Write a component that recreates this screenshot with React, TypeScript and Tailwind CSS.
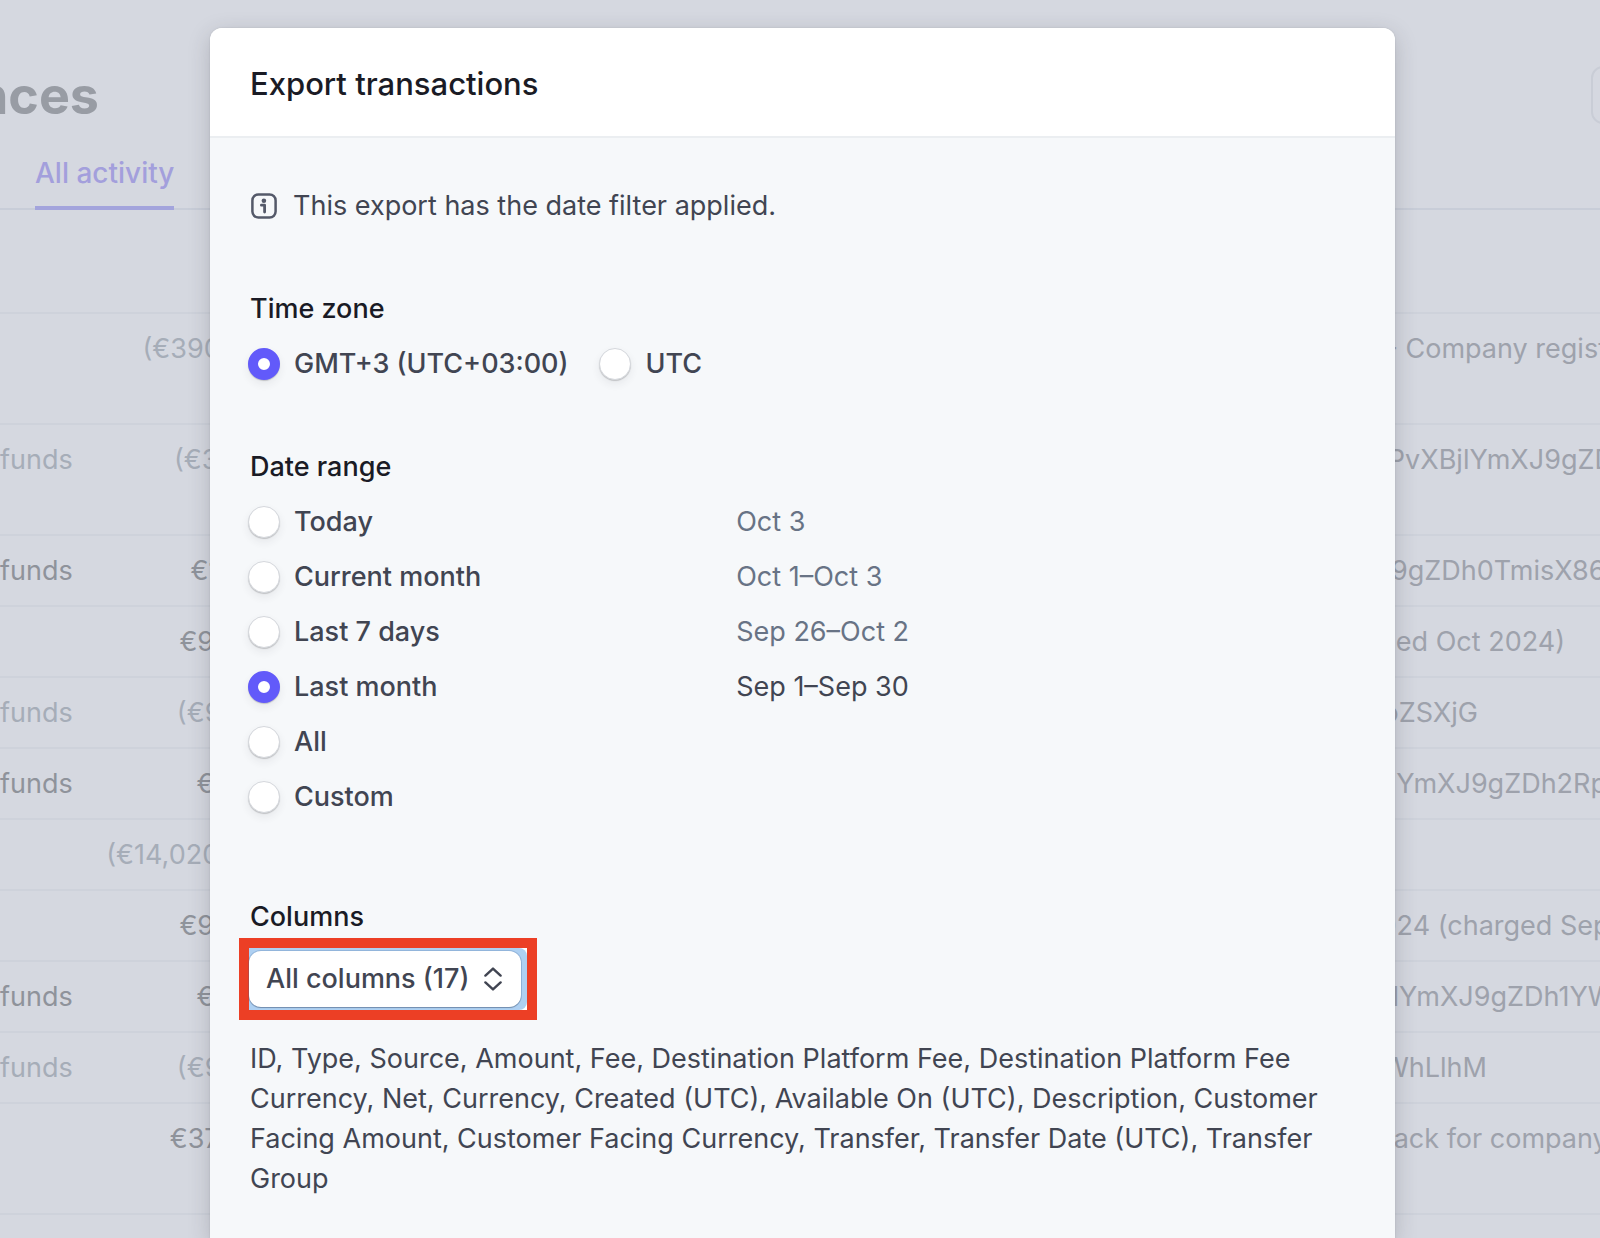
import React, { useState } from "react";

type Tone = "strong" | "muted";

interface Row {
  type: string;
  amount: string;
  description: string;
  tone: Tone;
  tall?: boolean;
}

const rows: Row[] = [
  { type: "", amount: "(€390.00)", description: "Plan - Company registration", tone: "muted", tall: true },
  { type: "funds", amount: "(€31.17)", description: "py_1JPvXBjlYmXJ9gZDh", tone: "muted", tall: true },
  { type: "funds", amount: "€10.01", description: "rmXJ9gZDh0TmisX86", tone: "strong" },
  { type: "", amount: "€93.03", description: "charged Oct 2024)", tone: "strong" },
  { type: "funds", amount: "(€9.33)", description: "ch_4oZSXjG", tone: "muted" },
  { type: "funds", amount: "€9.33", description: "pi_4vlYmXJ9gZDh2Rp", tone: "strong" },
  { type: "", amount: "(€14,020.44)", description: "", tone: "muted" },
  { type: "", amount: "€93.03", description: "ug 2024 (charged Sep 2024)", tone: "strong" },
  { type: "funds", amount: "€9.33", description: "py_7JlYmXJ9gZDh1YW", tone: "strong" },
  { type: "funds", amount: "(€9.33)", description: "co_7WhLlhM", tone: "muted" },
  { type: "", amount: "€371.33", description: "Playback for company", tone: "strong", tall: true },
];

const zones = ["GMT+3 (UTC+03:00)", "UTC"];

const ranges = [
  { label: "Today", dates: "Oct 3" },
  { label: "Current month", dates: "Oct 1–Oct 3" },
  { label: "Last 7 days", dates: "Sep 26–Oct 2" },
  { label: "Last month", dates: "Sep 1–Sep 30" },
  { label: "All", dates: "" },
  { label: "Custom", dates: "" },
];

const cell = "border-b-2 border-[#ced2db] py-[15px] align-top leading-[39px] whitespace-nowrap";

function Radio({ name, label, checked, onSelect }: { name: string; label: string; checked: boolean; onSelect: () => void }) {
  return (
    <label className="-ml-0.5 flex items-center gap-3.5 font-medium leading-10">
      <input
        type="radio"
        name={name}
        checked={checked}
        onChange={onSelect}
        className="size-8 shrink-0 appearance-none rounded-full border border-[#d5d8dd] bg-white shadow-[0_1px_1px_rgba(0,0,0,0.18),0_4px_8px_rgba(48,49,61,0.08)] checked:border-10 checked:border-[#625afa]"
      />
      {label}
    </label>
  );
}

function InfoIcon() {
  return (
    <svg width="26" height="26" viewBox="0 0 26 26" fill="none" stroke="#545969" strokeWidth="2.5" aria-hidden="true">
      <rect x="1.4" y="1.4" width="23.2" height="23.2" rx="6" />
      <circle cx="12.9" cy="7.7" r="2.3" fill="#545969" stroke="none" />
      <path d="M10.4 12.2h3.2v6.8" strokeWidth="2.8" strokeLinecap="round" strokeLinejoin="round" />
    </svg>
  );
}

function Background() {
  return (
    <div className="col-start-1 row-start-1 min-w-0 overflow-hidden">
      <header className="flex items-start justify-between pt-[66px]">
        <h1 className="flex w-[99px] justify-end text-[52px] leading-[60px] font-bold text-[#989ca4]">Balances</h1>
        <div className="w-[9px] shrink-0">
          <button className="h-[58px] rounded-xl border-2 border-[#c9cdd6] px-6">Export</button>
        </div>
      </header>
      <nav className="mt-[27px] flex border-b-2 border-[#c8cdd8] pl-[35px]">
        <a href="#activity" className="-mb-0.5 border-b-4 border-[#a3a4dc] pb-[13px] text-[28px] leading-10 font-medium text-[#a39fdc]">
          All activity
        </a>
      </nav>
      <table className="w-full table-fixed border-separate border-spacing-0">
        <colgroup>
          <col className="w-[75px]" />
          <col className="w-[196px]" />
          <col />
          <col className="w-[277px]" />
        </colgroup>
        <thead>
          <tr className="h-[104px]">
            <th className={cell} />
            <th className={cell} />
            <th className={cell} />
            <th className={cell} />
          </tr>
        </thead>
        <tbody>
          {rows.map((r, i) => (
            <tr key={i} className={(r.tall ? "h-[111px] " : "h-[71px] ") + (r.tone === "strong" ? "text-[#8f939b]" : "text-[#a6adb8]")}>
              <td className={cell}>{r.type}</td>
              <td className={cell + " text-right"}>{r.amount}</td>
              <td className={cell} />
              <td className={cell + " overflow-hidden text-[#9ea2ac]"}>{r.description}</td>
            </tr>
          ))}
        </tbody>
      </table>
    </div>
  );
}

export default function App() {
  const [zone, setZone] = useState(zones[0]);
  const [range, setRange] = useState("Last month");

  return (
    <div className="grid min-h-screen grid-cols-1 overflow-hidden bg-[#d5d8e0] font-['Inter','Liberation_Sans',sans-serif] text-[27px]">
      <Background />

      <div className="z-10 col-start-1 row-start-1 flex pt-7 pr-[205px] pl-[210px]">
        <section
          role="dialog"
          aria-labelledby="export-title"
          className="min-w-0 flex-1 rounded-t-xl bg-[#f6f8fa] text-[#414552] shadow-[0_0_2px_rgba(0,0,0,0.12),0_6px_22px_rgba(48,49,61,0.22)]"
        >
          <header className="rounded-t-xl border-b-2 border-[#ebeef1] bg-white px-10 pt-9 pb-8">
            <h2 id="export-title" className="text-[31px] leading-10 font-medium text-[#1a1b25]">
              Export transactions
            </h2>
          </header>

          <div className="px-10 pt-12 pb-10">
            <p className="flex items-center gap-4 pl-px leading-10">
              <InfoIcon />
              This export has the date filter applied.
            </p>

            <fieldset className="mt-[63px]">
              <legend className="leading-10 font-medium text-[#1a1b25]">Time zone</legend>
              <div className="mt-[15px] flex gap-[33px]">
                {zones.map((z) => (
                  <Radio key={z} name="zone" label={z} checked={zone === z} onSelect={() => setZone(z)} />
                ))}
              </div>
            </fieldset>

            <fieldset className="mt-[63px]">
              <legend className="leading-10 font-medium text-[#1a1b25]">Date range</legend>
              <div className="mt-[15px] grid gap-[15px]">
                {ranges.map((r) => (
                  <div key={r.label} className="grid grid-cols-[44%_1fr] leading-10">
                    <Radio name="range" label={r.label} checked={range === r.label} onSelect={() => setRange(r.label)} />
                    <span className={range === r.label ? "text-[#414552]" : "text-[#687385]"}>{r.dates}</span>
                  </div>
                ))}
              </div>
            </fieldset>

            <label htmlFor="columns" className="mt-20 block leading-10 font-medium text-[#1a1b25]">
              Columns
            </label>
            <div className="mt-px -ml-[11px] w-fit border-10 border-[#ec3f25] bg-white">
              <div className="rounded-r-lg bg-[#aed0f2] py-[3px] pr-1.5">
                <div className="relative">
                  <select
                    id="columns"
                    className="block h-14 w-[272px] appearance-none rounded-xl bg-white pr-10 pl-[17px] font-medium text-[#414552] shadow-[0_0_0_1px_rgba(64,100,150,0.25),0_1px_1px_rgba(0,0,0,0.25)] outline-none"
                  >
                    <option>All columns (17)</option>
                  </select>
                  <svg
                    className="pointer-events-none absolute top-4 right-[18px]"
                    width="20"
                    height="24"
                    viewBox="0 0 20 24"
                    fill="none"
                    stroke="#414552"
                    strokeWidth="2.4"
                    strokeLinecap="round"
                    strokeLinejoin="round"
                    aria-hidden="true"
                  >
                    <path d="M2.4 8.6 10 1.6l7.6 7M2.4 15.4l7.6 7 7.6-7" />
                  </svg>
                </div>
              </div>
            </div>

            <p className="mt-[19px] leading-10">
              ID, Type, Source, Amount, Fee, Destination Platform Fee, Destination Platform Fee Currency, Net, Currency,
              Created (UTC), Available On (UTC), Description, Customer Facing Amount, Customer Facing Currency, Transfer,
              Transfer Date (UTC), Transfer Group
            </p>
          </div>
        </section>
      </div>
    </div>
  );
}
